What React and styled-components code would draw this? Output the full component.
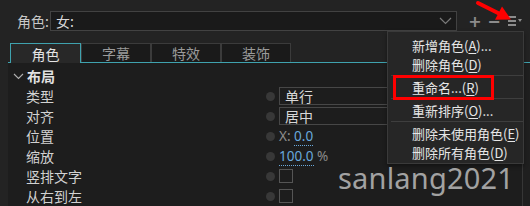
import React from "react"
import styled, { createGlobalStyle } from "styled-components"

const Global = createGlobalStyle`
  html, body {
    margin: 0;
    padding: 0;
    background: #232323;
  }
  body {
    font-family: "Noto Sans CJK SC", "Noto Sans", sans-serif;
    color: #d4d4d4;
  }
`

const Frame = styled.div`
  position: relative;
  width: 530px;
  height: 206px;
  overflow: hidden;
  background: #232323;
`

const TopRow = styled.div`
  display: flex;
  align-items: center;
  height: 20px;
  padding: 11px 0 0 17px;
`

const Label = styled.span`
  font-size: 14px;
  color: #c8c8c8;
  width: 33px;
  line-height: 20px;
`

const Combo = styled.div`
  display: flex;
  align-items: center;
  justify-content: space-between;
  box-sizing: border-box;
  width: 407px;
  height: 20px;
  padding: 0 4px 0 5px;
  background: #1a1a1a;
  border: 1px solid #424242;
  font-size: 14px;
  color: #d8d8d8;
`

const Tools = styled.div`
  display: flex;
  align-items: center;
  gap: 9px;
  margin-left: 13px;
`

const ToolButton = styled.span`
  display: flex;
  align-items: center;
  justify-content: center;
  width: ${(p) => p.$w || 10}px;
  height: 14px;
  color: #8c8c8c;
  font-family: "DejaVu Sans", sans-serif;
  font-size: 16px;
  font-weight: bold;
`

const TabBar = styled.div`
  display: flex;
  margin: 12px 0 0 8px;
  padding-left: 2px;
  height: 20px;
  border-bottom: 1px solid #3fa2ae;
  box-sizing: border-box;
`

const Tab = styled.div`
  box-sizing: border-box;
  width: ${(p) => (p.$active ? 71 : 70)}px;
  height: ${(p) => (p.$active ? 20 : 19)}px;
  display: flex;
  align-items: center;
  justify-content: center;
  font-size: 14px;
  background: ${(p) => (p.$active ? "#282828" : "#1a1a1a")};
  color: ${(p) => (p.$active ? "#e4e4e4" : "#9a9a9a")};
  border: 1px solid ${(p) => (p.$active ? "#3fa2ae" : "#3b3b3b")};
  border-bottom: none;
`

const Body = styled.div`
  display: flex;
  height: 143px;
`

const LeftGutter = styled.div`
  width: 8px;
  background: #232323;
`

const Panel = styled.div`
  width: 515px;
  background: #1d1d1d;
  border-right: 1px solid #363636;
  padding-top: 3px;
  box-sizing: border-box;
`

const RightGutter = styled.div`
  flex: 1;
  background: #1f1f1f;
`

const Section = styled.div`
  display: flex;
  align-items: center;
  height: 20px;
  padding-left: 5px;
  gap: 3px;
  font-size: 14px;
  font-weight: bold;
  color: #e2e2e2;
`

const Row = styled.div`
  display: grid;
  grid-template-columns: 240px 13px 1fr;
  align-items: center;
  height: 20px;
  padding-left: 18px;
`

const RowLabel = styled.span`
  font-size: 14px;
  color: #d2d2d2;
`

const Dot = styled.span`
  width: 9px;
  height: 9px;
  border-radius: 50%;
  background: #383838;
`

const Select = styled.div`
  box-sizing: border-box;
  height: 18px;
  border: 1px solid #474747;
  background: #1d1d1d;
  padding-left: 5px;
  font-size: 14px;
  line-height: 16px;
  color: #d8d8d8;
`

const Value = styled.span`
  font-family: "Noto Sans", sans-serif;
  font-size: 13.5px;
  color: #8c8c8c;
`

const Num = styled.span`
  color: #6aa9dc;
  border-bottom: 1px dotted #6aa9dc;
`

const Check = styled.span`
  box-sizing: border-box;
  width: 14px;
  height: 14px;
  border: 1px solid #555;
`

const Menu = styled.div`
  position: absolute;
  left: 387px;
  top: 31px;
  width: 137px;
  height: 133px;
  box-sizing: border-box;
  background: #262626;
  border: 1px solid #3a3a3a;
  padding-top: 3px;
  box-shadow: 0 2px 4px rgba(0, 0, 0, 0.4);
`

const MenuItem = styled.div`
  position: relative;
  height: ${(p) => p.$h || 20}px;
  display: flex;
  align-items: center;
  padding-left: 24px;
  font-size: 13px;
  color: #e6e6e6;
  white-space: nowrap;
`

const Highlight = styled.span`
  position: absolute;
  left: 5px;
  top: -2px;
  width: 101px;
  height: 25px;
  box-sizing: border-box;
  border: 3px solid #ff0000;
`

const Separator = styled.div`
  height: 1px;
  margin: 1px 0 1px 3px;
  background: #3e3e3e;
`

const U = styled.span`
  text-decoration: underline;
  text-underline-offset: 2px;
`

const Watermark = styled.div`
  position: absolute;
  left: 338px;
  top: 165px;
  font-family: "Noto Sans", sans-serif;
  font-size: 29px;
  line-height: 26px;
  color: #a2a2a2;
  letter-spacing: 0.2px;
`

const Arrow = styled.svg`
  position: absolute;
  left: 470px;
  top: 0;
`

const Chevron = () => (
  <svg width="13" height="8" viewBox="0 0 13 8">
    <path d="M1 1 L6.5 6.5 L12 1" fill="none" stroke="#7a7a7a" strokeWidth="1.2" />
  </svg>
)

const SmallChevron = () => (
  <svg width="11" height="7" viewBox="0 0 11 7">
    <path d="M1 1 L5.5 5.5 L10 1" fill="none" stroke="#b0b0b0" strokeWidth="1.1" />
  </svg>
)

const StackIcon = () => (
  <svg width="15" height="10" viewBox="0 0 15 10">
    <rect x="0" y="0" width="8" height="2" fill="#8c8c8c" />
    <rect x="0" y="4" width="8" height="2" fill="#8c8c8c" />
    <rect x="0" y="8" width="8" height="2" fill="#8c8c8c" />
    <path d="M10 3 L14 3 L12 6 Z" fill="#8c8c8c" />
  </svg>
)

const rows = [
  { label: "类型", kind: "select", text: "单行" },
  { label: "对齐", kind: "select", text: "居中" },
  { label: "位置", kind: "pos" },
  { label: "缩放", kind: "scale" },
  { label: "竖排文字", kind: "check" },
  { label: "从右到左", kind: "check" },
]

function Control({ row }) {
  if (row.kind === "select") return <Select>{row.text}</Select>
  if (row.kind === "pos")
    return (
      <Value>
        X: <Num>0.0</Num>
      </Value>
    )
  if (row.kind === "scale")
    return (
      <Value>
        <Num>100.0</Num> %
      </Value>
    )
  return <Check />
}

export default function App() {
  return (
    <Frame>
      <Global />
      <TopRow>
        <Label>角色:</Label>
        <Combo>
          <span>女:</span>
          <Chevron />
        </Combo>
        <Tools>
          <ToolButton>+</ToolButton>
          <ToolButton>−</ToolButton>
          <ToolButton $w={15}>
            <StackIcon />
          </ToolButton>
        </Tools>
      </TopRow>
      <TabBar>
        <Tab $active>角色</Tab>
        <Tab>字幕</Tab>
        <Tab>特效</Tab>
        <Tab>装饰</Tab>
      </TabBar>
      <Body>
        <LeftGutter />
        <Panel>
          <Section>
            <SmallChevron />
            布局
          </Section>
          {rows.map((r) => (
            <Row key={r.label}>
              <RowLabel>{r.label}</RowLabel>
              <Dot />
              <Control row={r} />
            </Row>
          ))}
        </Panel>
        <RightGutter />
      </Body>

      <Menu>
        <MenuItem>
          新增角色(<U>A</U>)...
        </MenuItem>
        <MenuItem $h={19}>
          删除角色(<U>D</U>)
        </MenuItem>
        <Separator />
        <MenuItem>
          重命名...(<U>R</U>)
          <Highlight />
        </MenuItem>
        <Separator />
        <MenuItem>
          重新排序(<U>O</U>)...
        </MenuItem>
        <Separator />
        <MenuItem>
          删除未使用角色(<U>E</U>)
        </MenuItem>
        <MenuItem $h={19}>
          删除所有角色(<U>D</U>)
        </MenuItem>
      </Menu>

      <Watermark>sanlang2021</Watermark>

      <Arrow width="60" height="30" viewBox="470 0 60 30">
        <line x1="478" y1="3" x2="499" y2="13.5" stroke="#ff0000" strokeWidth="4" strokeLinecap="round" />
        <polygon points="511,19.5 495,19.8 502,6.5" fill="#ff0000" />
      </Arrow>
    </Frame>
  )
}
